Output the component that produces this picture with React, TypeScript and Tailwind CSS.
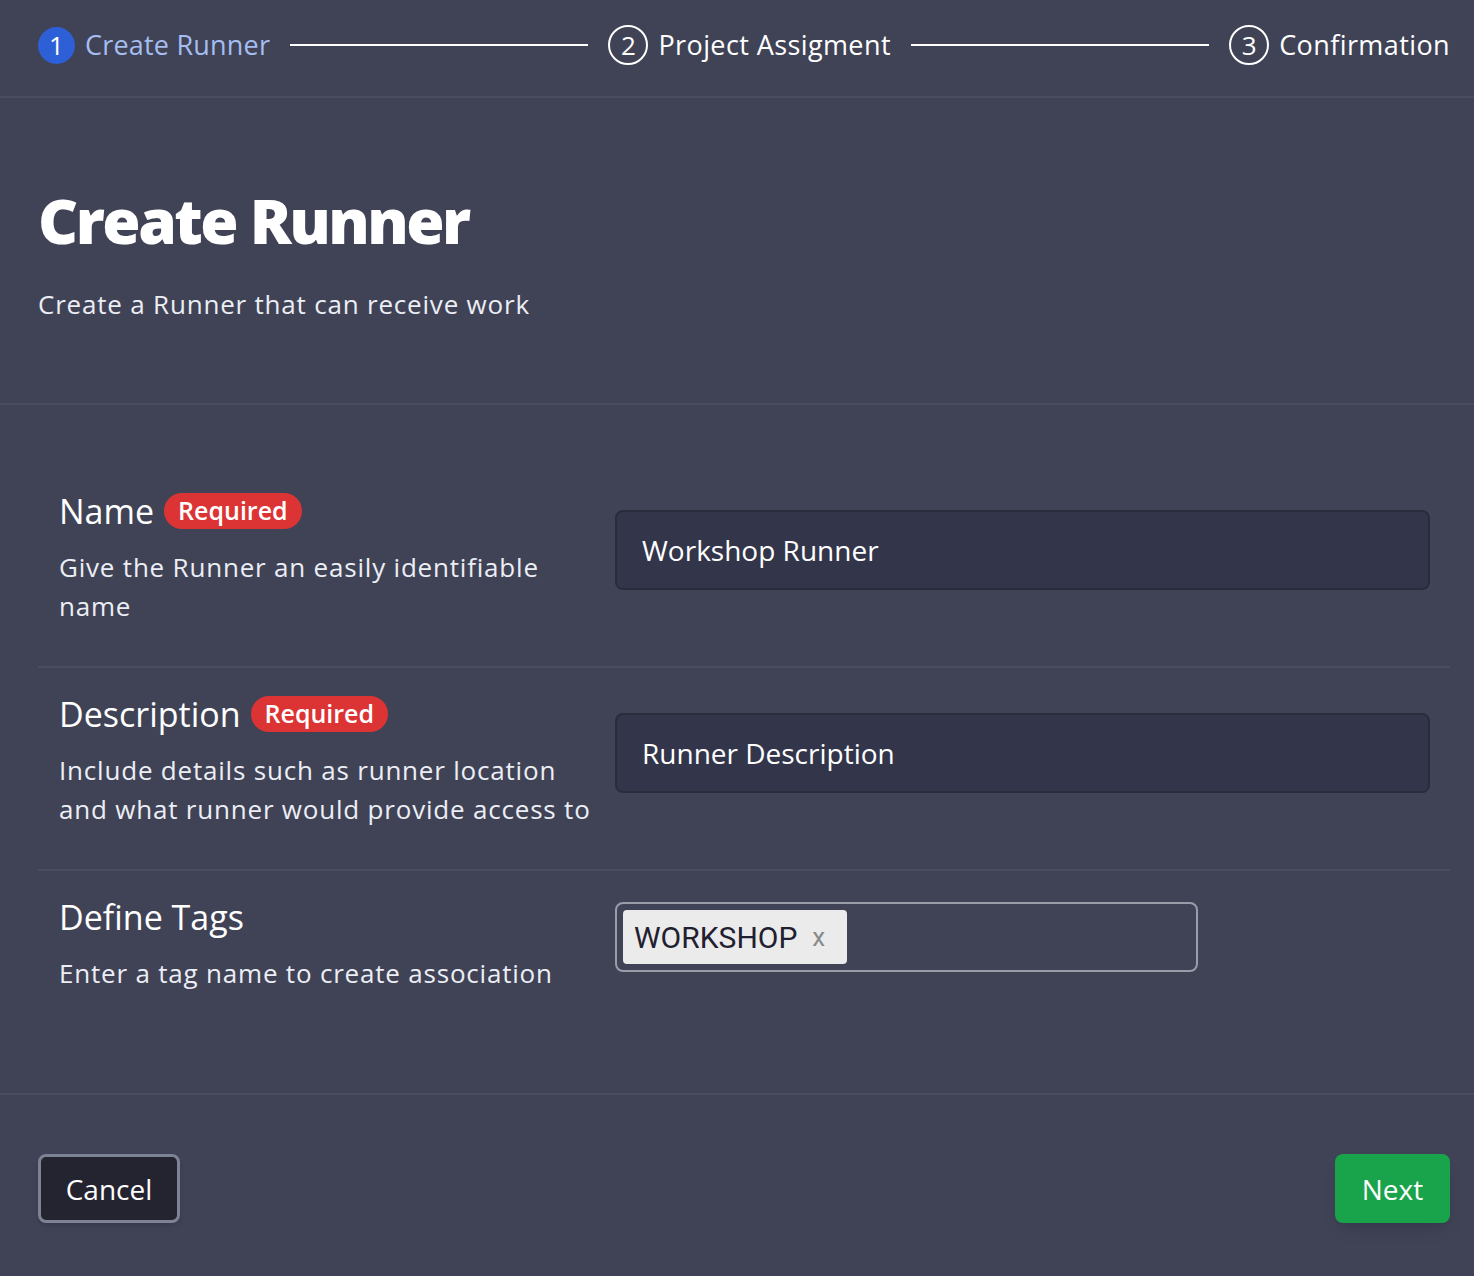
import React from "react";

const steps = [
  { n: 1, label: "Create Runner", active: true },
  { n: 2, label: "Project Assigment", active: false },
  { n: 3, label: "Confirmation", active: false },
];

function Stepper() {
  return (
    <div className="flex items-center h-[98px] pb-[6px] pl-[38px] pr-[24px] border-b-2 border-[#4a4d61]">
      {steps.map((s, i) => (
        <React.Fragment key={s.n}>
          <div className="flex items-center gap-[10px] shrink-0">
            <span
              className={
                s.active
                  ? "flex items-center justify-center w-[37px] h-[37px] rounded-full bg-[#2d5fd6] text-white text-[26px]"
                  : "flex items-center justify-center w-[40px] h-[40px] rounded-full border-2 border-white text-white text-[26px]"
              }
            >
              {s.n}
            </span>
            <span className={s.active ? "text-[27px] text-[#a5bdf0] tracking-[0.2px]" : "text-[27px] text-white tracking-[0.4px]"}>
              {s.label}
            </span>
          </div>
          {i < steps.length - 1 && <div className="flex-1 h-[2px] bg-white mx-[20px]" />}
        </React.Fragment>
      ))}
    </div>
  );
}

function Required() {
  return (
    <span className="inline-flex items-center h-[36px] px-[14px] rounded-full bg-[#dc3434] text-white text-[25px] font-semibold">
      Required
    </span>
  );
}

function Row({
  label,
  required,
  desc,
  children,
  last,
  fieldTop,
}: {
  label: string;
  required?: boolean;
  desc: React.ReactNode;
  children: React.ReactNode;
  last?: boolean;
  fieldTop: string;
}) {
  return (
    <div className={last ? "flex pt-[25px] pb-[38px]" : "flex pt-[25px] pb-[40px] border-b-2 border-[#4a4d61]"}>
      <div className="w-[577px] shrink-0 pl-[21px] pr-[4px]">
        <div className="flex items-center gap-[10px] h-[42px]">
          <span className="text-[34px] text-white">{label}</span>
          {required && <Required />}
        </div>
        <p className="mt-[16px] text-[26px] leading-[39px] tracking-[0.8px] text-[#eceef5] whitespace-nowrap">{desc}</p>
      </div>
      <div className={`flex-1 pr-[20px] ${fieldTop}`}>{children}</div>
    </div>
  );
}

export default function App() {
  return (
    <div className="min-h-screen bg-[#404356] text-white" style={{ fontFamily: "'Open Sans', 'Noto Sans', sans-serif" }}>
      <Stepper />

      <div className="px-[38px] pt-[84px] pb-[79px] border-b-2 border-[#4a4d61]">
        <h1 className="text-[62px] leading-[77px] font-extrabold tracking-[-2.5px]">Create Runner</h1>
        <p className="mt-[26px] text-[26px] leading-[39px] tracking-[0.8px] text-[#eceef5]">Create a Runner that can receive work</p>
      </div>

      <div className="pl-[38px] pr-[24px] pt-[60px] pb-[62px] border-b-2 border-[#4a4d61]">
        <Row
          label="Name"
          required
          desc={
            <>
              Give the Runner an easily identifiable
              <br />
              name
            </>
          }
          fieldTop="mt-[20px]"
        >
          <div className="h-[80px] flex items-center px-[25px] rounded-[8px] bg-[#33354a] border-2 border-[#2a2b3b] text-[28px] text-white">
            Workshop Runner
          </div>
        </Row>
        <Row
          label="Description"
          required
          desc={
            <>
              Include details such as runner location
              <br />
              and what runner would provide access to
            </>
          }
          fieldTop="mt-[20px]"
        >
          <div className="h-[80px] flex items-center px-[25px] rounded-[8px] bg-[#33354a] border-2 border-[#2a2b3b] text-[28px] text-white">
            Runner Description
          </div>
        </Row>
        <Row label="Define Tags" desc="Enter a tag name to create association" fieldTop="mt-[6px]" last>
          <div className="w-[583px] h-[70px] flex items-center px-[6px] rounded-[8px] border-2 border-[#9a9ca9]">
            <span
              className="inline-flex items-center h-[54px] pl-[11px] pr-[22px] rounded-[4px] bg-[#ebebeb] text-[#1f2030] text-[30px]"
              style={{ fontFamily: "Roboto, sans-serif" }}
            >
              WORKSHOP
              <span className="ml-[15px] text-[26px] text-[#8a8a8a]">x</span>
            </span>
          </div>
        </Row>
      </div>

      <div className="flex items-center justify-between pr-[24px] pl-[38px] pt-[59px] pb-[52px]">
        <button className="h-[69px] w-[142px] rounded-[8px] bg-[#23242f] border-[3px] border-[#7d8294] text-[28px] text-white shadow-md">
          Cancel
        </button>
        <button className="h-[69px] w-[115px] rounded-[8px] bg-[#19a34a] text-[28px] text-white shadow-lg">Next</button>
      </div>
    </div>
  );
}
